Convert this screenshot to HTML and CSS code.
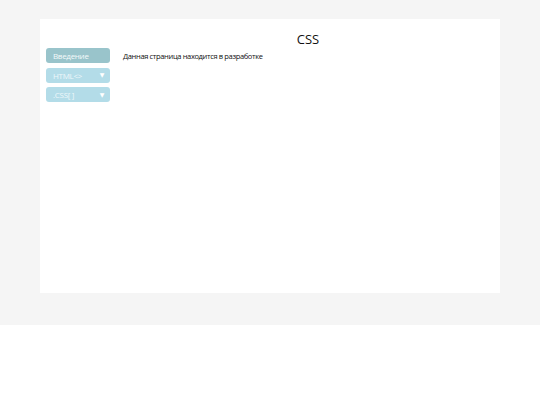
FILE: index.html
```html
<!DOCTYPE html>
<html lang="ru">
<head>
<meta charset="utf-8">
<link rel="stylesheet" href="styles.css">
</head>
<body>
<div class="bg">
  <div class="panel">
    <nav class="side">
      <div class="btn active">Введение</div>
      <div class="btn">HTML&lt;&gt;<span class="tri">▼</span></div>
      <div class="btn">.CSS[ ]<span class="tri">▼</span></div>
    </nav>
    <main class="content">
      <h1 class="title">CSS</h1>
      <p class="text">Данная страница находится в разработке</p>
    </main>
  </div>
</div>
</body>
</html>
```
FILE: styles.css
```css
html, body { margin: 0; padding: 0; background: #fff; }
body { font-family: "Open Sans", "DejaVu Sans", sans-serif; }
.bg {
  background: #f5f5f5;
  height: 325px;
  padding-top: 19px;
  box-sizing: border-box;
}
.panel {
  margin: 0 40px;
  height: 274px;
  background: #fff;
  display: flex;
  padding: 0 0 0 6px;
}
.side {
  width: 64px;
  margin-right: 6px;
  padding-top: 29px;
  display: flex;
  flex-direction: column;
  gap: 4.5px;
}
.btn {
  height: 15px;
  border-radius: 3px;
  background: #b3dce8;
  color: #eef7fa;
  font-size: 8px;
  letter-spacing: -0.3px;
  line-height: 15px;
  padding: 0 6px 0 7px;
  display: flex;
  align-items: center;
  justify-content: space-between;
}
.btn.active { background: #99c4cb; color: #f3f9fa; }
.tri { font-size: 6px; line-height: 15px; color: #fff; padding-top: 1px; }
.content { flex: 1; }
.title {
  margin: 12px 0 0;
  text-align: center;
  font-size: 13px;
  font-weight: normal;
  line-height: 16px;
  color: #111;
}
.text {
  margin: 4px 0 0 7px;
  font-size: 7.5px;
  letter-spacing: -0.35px;
  line-height: 10px;
  color: #111;
}
```
